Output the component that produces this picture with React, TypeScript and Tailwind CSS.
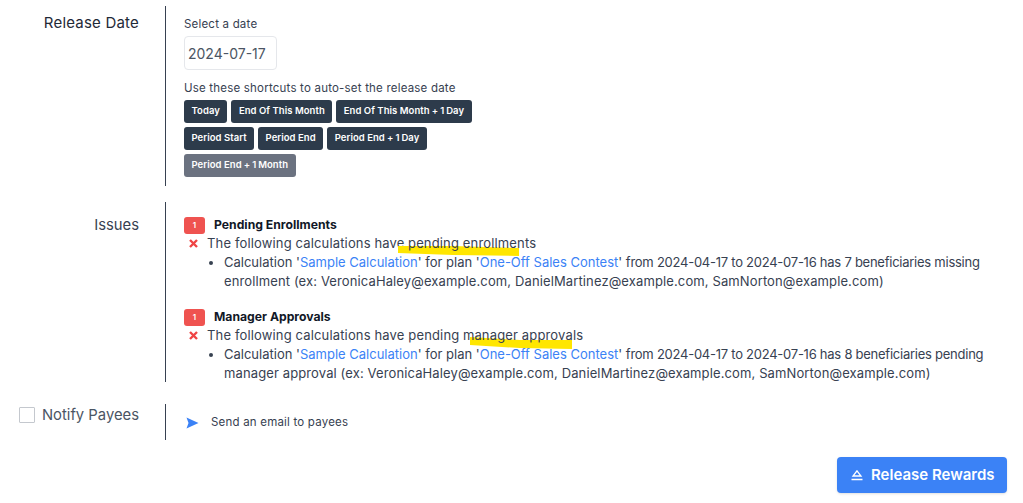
const font = "[font-family:Inter,'Noto_Sans',sans-serif]";

const Shortcut = ({ text, suffix, muted }: { text: string; suffix?: string; muted?: boolean }) => (
  <button
    className={`h-[23px] px-[7.5px] rounded-[3px] text-[9.5px] font-semibold text-white whitespace-pre tracking-[0.05px] ${
      muted ? "bg-[#6b7280]" : "bg-[#2d3b4b]"
    }`}
  >
    {text}
    {suffix && <span className="tracking-[-0.2px]"> + 1 </span>}
    {suffix}
  </button>
);

const XMark = () => (
  <svg width="9" height="9" viewBox="0 0 9 9" className="ml-[5px] mr-[9px] shrink-0">
    <path d="M1 1 L8 8 M8 1 L1 8" stroke="#ef4444" strokeWidth={2.4} />
  </svg>
);

const Issue = ({
  title,
  summary,
  marked,
  mark,
  count,
  rest,
}: {
  title: string;
  summary: string;
  marked: string;
  mark: React.ReactNode;
  count: string;
  rest: string;
}) => (
  <div>
    <div className="flex items-center h-[18px]">
      <span className="w-[21px] h-[17px] rounded-[3px] bg-[#ef5350] text-white text-[8px] font-semibold flex items-center justify-center">
        1
      </span>
      <span className="ml-[9px] text-[12.2px] font-bold text-[#111827]">{title}</span>
    </div>
    <div className="flex items-center h-[19px] text-[13px] tracking-[0.15px] text-[#374151]">
      <XMark />
      <span>{summary}</span>
      <span className="relative ml-[3.5px]">
        {mark}
        <span className="relative">{marked}</span>
      </span>
    </div>
    <ul className="list-disc ml-[40px] text-[13px] leading-[18.5px] text-[#374151] w-[790px]">
      <li>
        Calculation '<span className="text-[#3b82f6]">Sample Calculation</span>' for plan '
        <span className="text-[#3b82f6]">One-Off Sales Contest</span>'{" "}
        <span className="tracking-[-0.25px]">from 2024-04-17 to 2024-07-16 has {count}</span>
        <br />
        <span className="tracking-[0.12px]">{rest}</span>
      </li>
    </ul>
  </div>
);

const App = () => {
  return (
    <div className={`w-[1023px] h-[503px] bg-white overflow-hidden relative ${font}`}>
      <div className="flex pt-[6px]">
        <div className="w-[165px] shrink-0 pr-[26px] pt-[6px] text-right text-[15px] tracking-[0.2px] text-[#1f2937]">
          Release Date
        </div>
        <div className="border-l border-[#374151] h-[180px] pl-[18px] pt-[11px]">
          <div className="text-[11.5px] leading-[14px] tracking-[0.2px] text-[#374151]">Select a date</div>
          <div className="mt-[5px] w-[93px] h-[34px] border border-[#e5e7eb] rounded-[4px] flex items-center pl-[3px] text-[14px] text-[#4b5563]">
            2024-07-17
          </div>
          <div className="mt-[11px] text-[11.5px] leading-[14px] tracking-[0.2px] text-[#374151]">
            Use these shortcuts to auto-set the release date
          </div>
          <div className="flex gap-[4px] mt-[5px]">
            <Shortcut text="Today" />
            <Shortcut text="End Of This Month" />
            <Shortcut text="End Of This Month" suffix="Day" />
          </div>
          <div className="flex gap-[4px] mt-[4px]">
            <Shortcut text="Period Start" />
            <Shortcut text="Period End" />
            <Shortcut text="Period End" suffix="Day" />
          </div>
          <div className="flex gap-[4px] mt-[4px]">
            <Shortcut text="Period End" suffix="Month" muted />
          </div>
        </div>
      </div>

      <div className="flex mt-[16px]">
        <div className="w-[165px] shrink-0 pr-[26px] pt-[12px] text-right text-[14.8px] text-[#374151]">Issues</div>
        <div className="border-l border-[#374151] h-[180px] pl-[18px] pt-[14px] flex flex-col gap-[18px]">
          <Issue
            title="Pending Enrollments"
            summary="The following calculations have"
            marked="pending enrollments"
            mark={
              <svg width="121" height="12" viewBox="0 0 121 12" className="absolute left-[-10px] top-[11px]">
                <path d="M0 1 L55 1 L121 3 L121 11 L55 10 L0 8 Z" fill="#ffe600" />
              </svg>
            }
            count="7 beneficiaries missing"
            rest="enrollment (ex: VeronicaHaley@example.com, DanielMartinez@example.com, SamNorton@example.com)"
          />
          <Issue
            title="Manager Approvals"
            summary="The following calculations have pending"
            marked="manager approvals"
            mark={
              <svg width="102" height="14" viewBox="0 0 102 14" className="absolute left-[7px] top-[10px]">
                <path d="M0 1 L50 4 L102 4 L102 13 L50 12 L0 9 Z" fill="#ffe600" />
              </svg>
            }
            count="8 beneficiaries pending"
            rest="manager approval (ex: VeronicaHaley@example.com, DanielMartinez@example.com, SamNorton@example.com)"
          />
        </div>
      </div>

      <div className="flex mt-[22px]">
        <div className="w-[165px] shrink-0 pr-[26px] flex justify-end items-start gap-[7px] text-[14.8px] text-[#4b5563]">
          <span className="w-[16px] h-[16px] mt-[3px] border border-[#c4c8ce] rounded-[1px] bg-white" />
          Notify Payees
        </div>
        <div className="border-l border-[#374151] h-[36px] pl-[20px] pt-[2px] flex items-center text-[11.5px] tracking-[0.2px] text-[#374151]">
          <svg width="13" height="12" viewBox="0 0 13 12" className="mr-[12px]">
            <path d="M0.5 0.5 L12.5 6 L0.5 11.5 L2.5 6 Z" fill="#3b82f6" />
          </svg>
          Send an email to payees
        </div>
      </div>

      <div className="absolute left-[837px] top-[457px] w-[170px] h-[36px] bg-[#3b82f6] rounded-[4px] flex items-center pl-[14px] text-white text-[15px] font-semibold shadow-sm">
        <svg width="12" height="11" viewBox="0 0 12 11" className="mr-[8px]" fill="none" stroke="white" strokeWidth={1.3}>
          <path d="M6 0.8 L10 6 L2 6 Z M0.5 9.5 L11.5 9.5" />
        </svg>
        Release Rewards
      </div>
    </div>
  );
};

export default App;
